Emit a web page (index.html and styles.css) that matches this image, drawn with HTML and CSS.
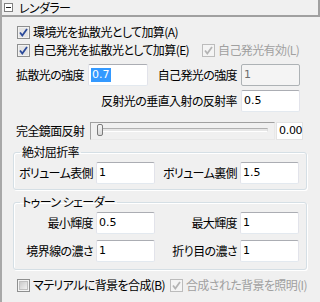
FILE: index.html
```html
<!DOCTYPE html>
<html lang="ja">

<head>
    <meta charset="UTF-8">
    <title>レンダラー</title>
    <link rel="stylesheet" href="styles.css">
</head>

<body>
    <div class="panel">
        <div class="header">
            <svg class="toggle" width="9" height="9" viewBox="0 0 9 9">
                <rect x="0.5" y="0.5" width="8" height="8" fill="#fff" stroke="#808080" />
                <path d="M2 4.5 H7" stroke="#202020" />
            </svg>
            <span>レンダラー</span>
        </div>

        <div class="content">
            <div class="check-row">
                <label class="check">
                    <svg class="box" width="13" height="13" viewBox="0 0 13 13">
                        <rect x="0.5" y="0.5" width="12" height="12" fill="#f2f2f2" stroke="#8e8f8f" />
                        <rect x="2" y="2" width="9" height="9" fill="#e4e4e4" />
                        <path d="M3 6.5 L5.3 9.5 L10 3" fill="none" stroke="#2b4a9a" stroke-width="1.8" />
                    </svg>
                    <span>環境光を拡散光として加算(A)</span>
                </label>
            </div>

            <div class="check-row">
                <label class="check first-wide">
                    <svg class="box" width="13" height="13" viewBox="0 0 13 13">
                        <rect x="0.5" y="0.5" width="12" height="12" fill="#f2f2f2" stroke="#8e8f8f" />
                        <rect x="2" y="2" width="9" height="9" fill="#e4e4e4" />
                        <path d="M3 6.5 L5.3 9.5 L10 3" fill="none" stroke="#2b4a9a" stroke-width="1.8" />
                    </svg>
                    <span>自己発光を拡散光として加算(E)</span>
                </label>
                <label class="check disabled">
                    <svg class="box" width="13" height="13" viewBox="0 0 13 13">
                        <rect x="0.5" y="0.5" width="12" height="12" fill="#f4f4f4" stroke="#bcbcbc" />
                        <path d="M3 6.5 L5.3 9.5 L10 3" fill="none" stroke="#b4b4b4" stroke-width="1.8" />
                    </svg>
                    <span>自己発光有効(L)</span>
                </label>
            </div>

            <div class="field-row first">
                <span class="lbl-left">拡散光の強度</span>
                <div class="input wide"><span class="sel">0.7</span></div>
                <span class="lbl-right">自己発光の強度</span>
                <div class="input disabled">1</div>
            </div>

            <div class="field-row end">
                <span class="lbl-right">反射光の垂直入射の反射率</span>
                <div class="input">0.5</div>
            </div>

            <div class="slider-row">
                <span class="lbl-slider">完全鏡面反射</span>
                <div class="slider">
                    <div class="track"></div>
                    <div class="thumb"></div>
                </div>
                <div class="value">0.00</div>
            </div>

            <fieldset class="group">
                <legend>絶対屈折率</legend>
                <div class="grid">
                    <span class="glbl">ボリューム表側</span>
                    <div class="input">1</div>
                    <span class="glbl">ボリューム裏側</span>
                    <div class="input">1.5</div>
                </div>
            </fieldset>

            <fieldset class="group toon">
                <legend>トゥーン シェーダー</legend>
                <div class="grid">
                    <span class="glbl">最小輝度</span>
                    <div class="input">0.5</div>
                    <span class="glbl">最大輝度</span>
                    <div class="input">1</div>
                    <span class="glbl">境界線の濃さ</span>
                    <div class="input">1</div>
                    <span class="glbl">折り目の濃さ</span>
                    <div class="input">1</div>
                </div>
            </fieldset>

            <div class="check-row bottom">
                <label class="check first-narrow">
                    <svg class="box" width="13" height="13" viewBox="0 0 13 13">
                        <defs>
                            <linearGradient id="unchk" x1="0" y1="0" x2="1" y2="1">
                                <stop offset="0" stop-color="#c8c8c8" />
                                <stop offset="1" stop-color="#f4f4f4" />
                            </linearGradient>
                        </defs>
                        <rect x="0.5" y="0.5" width="12" height="12" fill="#f4f4f4" stroke="#8e8f8f" />
                        <rect x="2.5" y="2.5" width="8" height="8" fill="url(#unchk)" stroke="#c0c0c0" />
                    </svg>
                    <span>マテリアルに背景を合成(B)</span>
                </label>
                <label class="check disabled">
                    <svg class="box" width="13" height="13" viewBox="0 0 13 13">
                        <rect x="0.5" y="0.5" width="12" height="12" fill="#f4f4f4" stroke="#bcbcbc" />
                        <path d="M3 6.5 L5.3 9.5 L10 3" fill="none" stroke="#b4b4b4" stroke-width="1.8" />
                    </svg>
                    <span>合成された背景を照明(I)</span>
                </label>
            </div>
        </div>
    </div>
</body>

</html>
```

FILE: styles.css
```css
* {
    box-sizing: border-box;
}

body {
    margin: 0;
    background: #f0f0f0;
    color: #000;
    font-family: "Noto Sans CJK JP", sans-serif;
    font-size: 12px;
    line-height: 14px;
    letter-spacing: -0.6px;
    font-feature-settings: "palt";
}

.panel {
    height: 302px;
    border-left: 2px solid #a8a8a8;
}

.header {
    height: 17px;
    display: flex;
    align-items: center;
    gap: 6px;
    padding-left: 2px;
    border-bottom: 2px solid #a0a0a0;
    border-right: 2px solid #a0a0a0;
}

.toggle {
    flex-shrink: 0;
}

.content {
    padding: 6px 13px 0 11px;
}

/* checkbox rows */
.check-row {
    height: 18px;
    display: flex;
    align-items: center;
    padding-left: 4px;
    white-space: nowrap;
}

.check-row.bottom {
    margin-top: 6px;
}

.check {
    display: flex;
    align-items: center;
    gap: 3px;
}

.check .box {
    flex-shrink: 0;
}

.check.first-wide {
    width: 185px;
}

.check.first-narrow {
    width: 153px;
}

.check.disabled {
    color: #a0a0a0;
}

/* text fields */
.field-row {
    height: 22px;
    display: flex;
    align-items: center;
    padding: 0 7px 0 3px;
    white-space: nowrap;
}

.field-row.first {
    margin-top: 5px;
}

.field-row.end {
    margin-top: 4px;
    justify-content: flex-end;
}

.lbl-left {
    width: 72px;
}

.lbl-right {
    width: 93px;
    padding-right: 4px;
    text-align: right;
}

.field-row.end .lbl-right {
    width: auto;
}

.input {
    width: 59px;
    height: 22px;
    display: flex;
    align-items: center;
    padding-left: 2px;
    background: #fff;
    border: 1px solid;
    border-color: #abadb3 #e2e3ea #e3e9ef #e2e3ea;
    border-radius: 2px;
    font-family: "DejaVu Sans", sans-serif;
    font-size: 11px;
    letter-spacing: 0;
    flex-shrink: 0;
}

.input.wide {
    width: 60px;
}

.input.disabled {
    background: #f4f4f4;
    border-color: #adb2b5;
    color: #6d6d6d;
}

.sel {
    background: #3399ff;
    color: #fff;
    padding: 0 1px;
    line-height: 14px;
}

/* slider */
.slider-row {
    height: 18px;
    margin-top: 10px;
    display: flex;
    align-items: center;
    padding-left: 3px;
    white-space: nowrap;
}

.lbl-slider {
    width: 74px;
}

.slider {
    position: relative;
    width: 185px;
    height: 18px;
    padding: 5px 6px 0 8px;
    border: 1px solid;
    border-color: #a0a0a0 #e8e8e8 #e8e8e8 #a0a0a0;
}

.track {
    height: 4px;
    background: #e7e7e7;
    border: 1px solid;
    border-color: #b0b0b0 #dcdcdc #fff #b0b0b0;
}

.thumb {
    position: absolute;
    left: 6px;
    top: 1px;
    width: 6px;
    height: 12px;
    border: 1px solid #7c7c7c;
    border-radius: 2px;
    background: linear-gradient(#f6f6f6, #d9d9d9);
}

.value {
    width: 27px;
    height: 18px;
    margin-left: 1px;
    padding-left: 2px;
    display: flex;
    align-items: center;
    background: #fff;
    border: 1px solid #e3e3e3;
    font-family: "DejaVu Sans", sans-serif;
    font-size: 11px;
    letter-spacing: -0.3px;
    white-space: nowrap;
}

/* group boxes */
.group {
    margin: 5px 0 0;
    padding: 3px 0 5px;
    min-width: 0;
    border: 1px solid #d5dfe5;
    border-radius: 3px;
    box-shadow: inset 1px 1px 0 #fff, 1px 1px 0 #fff;
}

.group.toon {
    padding-bottom: 7px;
}

.group legend {
    margin-left: 6px;
    padding: 0 2px;
    line-height: 14px;
}

.grid {
    display: grid;
    grid-template-columns: 79px 59px 79px 59px;
    column-gap: 3px;
    row-gap: 6px;
    align-items: center;
}

.glbl {
    text-align: right;
    white-space: nowrap;
}
```
